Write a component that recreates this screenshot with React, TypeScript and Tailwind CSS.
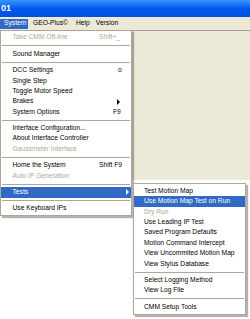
import React from "react";

type Item =
  | { sep: true }
  | {
      sep?: false;
      label: string;
      shortcut?: string;
      scX?: number;
      disabled?: boolean;
      active?: boolean;
      arrowX?: number;
    };

const mainItems: Item[] = [
  { label: "Take CMM Off-line", shortcut: "Shift+_", scX: 99, disabled: true },
  { sep: true },
  { label: "Sound Manager" },
  { sep: true },
  { label: "DCC Settings", shortcut: "o", scX: 118 },
  { label: "Single Step" },
  { label: "Toggle Motor Speed" },
  { label: "Brakes", arrowX: 117 },
  { label: "System Options", shortcut: "F9", scX: 113 },
  { sep: true },
  { label: "Interface Configuration..." },
  { label: "About Interface Controller" },
  { label: "Gaussmeter Interface", disabled: true },
  { sep: true },
  { label: "Home the System", shortcut: "Shift F9", scX: 99 },
  { label: "Auto IP Generation", disabled: true },
  { sep: true },
  { label: "Tests", active: true, arrowX: 126 },
  { sep: true },
  { label: "Use Keyboard IPs" },
];

const subItems: Item[] = [
  { label: "Test Motion Map" },
  { label: "Use Motion Map Test on Run", active: true },
  { label: "Dry Run", disabled: true },
  { label: "Use Leading IP Test" },
  { label: "Saved Program Defaults" },
  { label: "Motion Command Intercept" },
  { label: "View Uncommited Motion Map" },
  { label: "View Stylus Database" },
  { sep: true },
  { label: "Select Logging Method" },
  { label: "View Log File" },
  { sep: true },
  { label: "CMM Setup Tools" },
];

function Arrow({ white }: { white?: boolean }) {
  return (
    <svg width="3" height="6" viewBox="0 0 3 6" className="block">
      <path d="M0 0 L3 3 L0 6 Z" fill={white ? "#ffffff" : "#000000"} />
    </svg>
  );
}

function MenuList({ items, padLeft }: { items: Item[]; padLeft: number }) {
  return (
    <div className="flex flex-col">
      {items.map((it, i) => {
        if (it.sep) {
          return (
            <div key={i} className="h-[6px] flex items-center px-[1px]">
              <div className="h-px w-full bg-[#aca899]" />
            </div>
          );
        }
        const color = it.active
          ? "text-white"
          : it.disabled
          ? "text-[#aca899]"
          : "text-black";
        return (
          <div
            key={i}
            className={`relative h-[10.4px] flex items-center whitespace-nowrap leading-none ${color} ${
              it.active ? "bg-[#316ac5]" : ""
            }`}
            style={{ paddingLeft: padLeft }}
          >
            <span>{it.label}</span>
            {it.shortcut && (
              <span className="absolute top-0 h-full flex items-center" style={{ left: (it.scX ?? 99) - 1 }}>
                {it.shortcut}
              </span>
            )}
            {it.arrowX !== undefined && (
              <span className="absolute top-0 h-full flex items-center" style={{ left: it.arrowX - 1 }}>
                <Arrow white={it.active} />
              </span>
            )}
          </div>
        );
      })}
    </div>
  );
}

export default function App() {
  return (
    <div
      className="relative w-[250px] h-[319px] overflow-hidden bg-white text-[6.7px] flex flex-col"
      style={{ fontFamily: '"Liberation Sans", Arial, sans-serif' }}
    >
      {/* Title bar */}
      <div className="h-[17px] bg-gradient-to-b from-[#3a93ff] via-[#0058ee] to-[#0050e0] flex items-center pl-[1px]">
        <span className="text-white font-bold text-[9px] leading-none">01</span>
      </div>
      {/* Menu bar */}
      <div className="h-[13px] bg-[#ece9d8] flex items-center text-black">
        <div className="h-[10px] w-[28px] bg-[#316ac5] text-white flex items-center pl-[4px]">System</div>
        <div className="pl-[5px]">GEO-Plus©</div>
        <div className="pl-[8px]">Help</div>
        <div className="pl-[6px]">Version</div>
      </div>
      {/* Client area */}
      <div className="h-[150px] bg-[#ece9d8] border-t border-[#a0a0a0]" />
      <div className="flex-1 bg-white" />

      {/* Main dropdown */}
      <div className="absolute left-0 top-[30px] w-[132px] bg-white border border-[#aca899] py-[1.5px] shadow-[2px_2px_1px_rgba(0,0,0,0.3)]">
        <MenuList items={mainItems} padLeft={11.5} />
      </div>

      {/* Submenu */}
      <div className="absolute left-[133px] top-[183px] w-[113px] bg-white border border-[#aca899] py-[2px] shadow-[2px_2px_1px_rgba(0,0,0,0.3)]">
        <MenuList items={subItems} padLeft={10} />
      </div>
    </div>
  );
}
